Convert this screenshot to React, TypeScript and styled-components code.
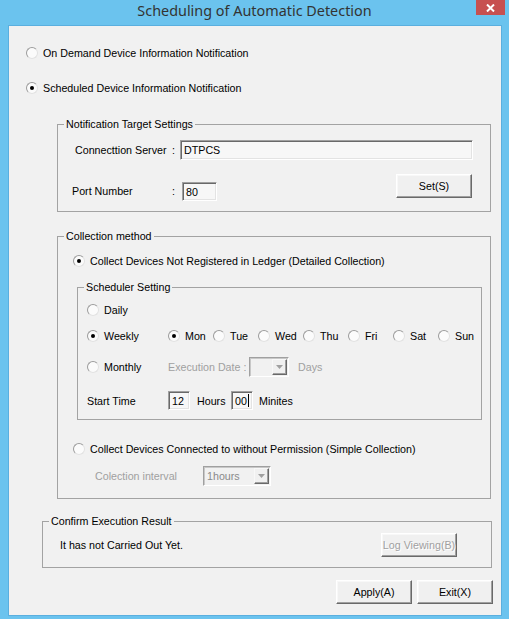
import React from 'react';
import styled, { createGlobalStyle } from 'styled-components';

const Global = createGlobalStyle`
  html, body { margin: 0; padding: 0; }
  body { font-family: "Liberation Sans", Arial, sans-serif; }
  * { box-sizing: border-box; }
`;

const Window = styled.div`
  width: 509px;
  height: 619px;
  background: #6bc3ee;
  display: flex;
  flex-direction: column;
`;

const TitleBar = styled.div`
  height: 25px;
  flex: none;
  display: grid;
  grid-template-columns: 1fr auto 1fr;
  align-items: start;
`;

const Title = styled.div`
  grid-column: 2;
  font-family: "Noto Sans", "Open Sans", sans-serif;
  font-size: 14.4px;
  line-height: 22px;
  color: #333333;
  white-space: nowrap;
`;

const CloseButton = styled.div`
  grid-column: 3;
  justify-self: end;
  width: 29px;
  height: 15px;
  margin-right: 4px;
  background: #c75050;
  display: flex;
  align-items: center;
  justify-content: center;
`;

const Body = styled.div`
  flex: 1;
  margin: 0 7px 3px 8px;
  background: #f1f1f1;
  border: 1px solid #5aafdf;
  display: flex;
  flex-direction: column;
  font-size: 10.7px;
  color: #000;
`;

const RadioCircle = styled.span<{ $checked?: boolean }>`
  width: 12px;
  height: 12px;
  flex: none;
  border-radius: 50%;
  background: #fbfbfb;
  border: 1px solid;
  border-color: #9c9c9c #e2e2e2 #e2e2e2 #9c9c9c;
  display: flex;
  align-items: center;
  justify-content: center;
  &::after {
    content: '';
    width: 4px;
    height: 4px;
    border-radius: 50%;
    background: #000;
    display: ${(p) => (p.$checked ? 'block' : 'none')};
  }
`;

const RadioLabel = styled.label<{ $mt?: number; $pl?: number }>`
  display: flex;
  align-items: center;
  gap: 5px;
  height: 16px;
  margin-top: ${(p) => p.$mt ?? 0}px;
  padding-left: ${(p) => p.$pl ?? 0}px;
  white-space: nowrap;
`;

const Radio: React.FC<{ checked?: boolean; label: string; mt?: number; pl?: number }> = ({
  checked,
  label,
  mt,
  pl,
}) => (
  <RadioLabel $mt={mt} $pl={pl}>
    <RadioCircle $checked={checked} />
    <span>{label}</span>
  </RadioLabel>
);

const Group = styled.div<{ $ml: number; $w: number; $h: number; $mt: number }>`
  position: relative;
  flex: none;
  margin-top: ${(p) => p.$mt}px;
  margin-left: ${(p) => p.$ml}px;
  width: ${(p) => p.$w}px;
  height: ${(p) => p.$h}px;
  border: 1px solid #a3a3a3;
  display: flex;
  flex-direction: column;
`;

const Legend = styled.span`
  position: absolute;
  top: -7px;
  left: 6px;
  padding: 0 2px;
  line-height: 13px;
  background: #f1f1f1;
  white-space: nowrap;
`;

const FieldRow = styled.div<{ $mt: number; $pl: number; $h: number }>`
  display: flex;
  align-items: center;
  margin-top: ${(p) => p.$mt}px;
  padding-left: ${(p) => p.$pl}px;
  height: ${(p) => p.$h}px;
`;

const FieldLabel = styled.span<{ $w: number; $gray?: boolean }>`
  width: ${(p) => p.$w}px;
  flex: none;
  white-space: nowrap;
  color: ${(p) => (p.$gray ? '#a0a0a0' : '#000')};
`;

const Colon = styled.span<{ $w: number }>`
  width: ${(p) => p.$w}px;
  flex: none;
`;

const TextBox = styled.div<{ $w: number; $h: number }>`
  width: ${(p) => p.$w}px;
  height: ${(p) => p.$h}px;
  flex: none;
  background: #f7f7f7;
  border: 1px solid;
  border-color: #a0a0a0 #ffffff #ffffff #a0a0a0;
  box-shadow: inset 1px 1px #696969, inset -1px -1px #e3e3e3;
  display: flex;
  align-items: center;
  padding-left: 3px;
  white-space: nowrap;
`;

const Caret = styled.span`
  width: 1px;
  height: 13px;
  background: #000;
  margin-left: 1px;
`;

const Button = styled.button<{ $disabled?: boolean }>`
  width: 76px;
  height: 24px;
  flex: none;
  padding: 0;
  font: inherit;
  color: ${(p) => (p.$disabled ? '#a0a0a0' : '#000')};
  background: #f0f0f0;
  border: 1px solid;
  border-color: #ffffff #696969 #696969 #ffffff;
  box-shadow: inset -1px -1px #a0a0a0, inset 1px 1px #f8f8f8;
  text-shadow: ${(p) => (p.$disabled ? '1px 1px #ffffff' : 'none')};
`;

const Combo = styled.div<{ $w: number }>`
  width: ${(p) => p.$w}px;
  height: 20px;
  flex: none;
  display: flex;
  border: 1px solid;
  border-color: #a0a0a0 #ffffff #ffffff #a0a0a0;
  box-shadow: inset 1px 1px #c8c8c8;
  background: #f1f1f1;
`;

const ComboText = styled.span`
  flex: 1;
  color: #8a8a8a;
  padding-left: 3px;
  display: flex;
  align-items: center;
`;

const DropButton = styled.span`
  width: 15px;
  height: 16px;
  margin: 1px 1px 0 0;
  flex: none;
  background: #f0f0f0;
  border: 1px solid;
  border-color: #f8f8f8 #696969 #696969 #f8f8f8;
  box-shadow: inset -1px -1px #a0a0a0;
  display: flex;
  align-items: center;
  justify-content: center;
`;

const DropDown: React.FC<{ w: number; value?: string }> = ({ w, value }) => (
  <Combo $w={w}>
    <ComboText>{value}</ComboText>
    <DropButton>
      <svg width="7" height="4" viewBox="0 0 7 4">
        <path d="M0 0H7L3.5 4Z" fill="#a0a0a0" />
      </svg>
    </DropButton>
  </Combo>
);

const SchedRow = styled.div<{ $mt: number; $h: number }>`
  display: flex;
  align-items: center;
  margin-top: ${(p) => p.$mt}px;
  height: ${(p) => p.$h}px;
  padding-left: 9px;
`;

const FirstCol = styled.div`
  width: 81px;
  flex: none;
  display: flex;
  align-items: center;
  white-space: nowrap;
`;

const DayGrid = styled.div`
  display: grid;
  grid-template-columns: repeat(7, 45px);
`;

const Gap = styled.span<{ $w: number }>`
  width: ${(p) => p.$w}px;
  flex: none;
`;

const ResultRow = styled.div`
  display: flex;
  align-items: center;
  justify-content: space-between;
  margin-top: 11px;
  height: 24px;
  padding: 0 34px 0 17px;
`;

const ActionRow = styled.div`
  display: flex;
  justify-content: flex-end;
  gap: 5px;
  margin-top: 12px;
  padding-right: 8px;
`;

const Text = styled.span<{ $gray?: boolean }>`
  white-space: nowrap;
  color: ${(p) => (p.$gray ? '#a0a0a0' : '#000')};
`;

const days = ['Mon', 'Tue', 'Wed', 'Thu', 'Fri', 'Sat', 'Sun'];

export default function App() {
  return (
    <>
      <Global />
      <Window>
        <TitleBar>
          <Title>Scheduling of Automatic Detection</Title>
          <CloseButton>
            <svg width="9" height="8" viewBox="0 0 9 8">
              <path d="M1 0.5L8 7.5M8 0.5L1 7.5" stroke="#fff" strokeWidth="2" />
            </svg>
          </CloseButton>
        </TitleBar>
        <Body>
          <Radio label="On Demand Device Information Notification" mt={19} pl={17} />
          <Radio checked label="Scheduled Device Information Notification" mt={19} pl={17} />

          <Group $mt={28} $ml={48} $w={434} $h={88}>
            <Legend>Notification Target Settings</Legend>
            <FieldRow $mt={15} $pl={17} $h={20}>
              <FieldLabel $w={97}>Connecttion Server</FieldLabel>
              <Colon $w={8}>:</Colon>
              <TextBox $w={293} $h={20}>DTPCS</TextBox>
            </FieldRow>
            <FieldRow $mt={14} $pl={14} $h={27}>
              <FieldLabel $w={100} style={{ alignSelf: 'flex-end', lineHeight: '19px' }}>
                Port Number
              </FieldLabel>
              <Colon $w={10} style={{ alignSelf: 'flex-end', lineHeight: '19px' }}>
                :
              </Colon>
              <TextBox $w={35} $h={19} style={{ alignSelf: 'flex-end' }}>
                80
              </TextBox>
              <Button style={{ marginLeft: 'auto', marginRight: 18, alignSelf: 'flex-start' }}>
                Set(S)
              </Button>
            </FieldRow>
          </Group>

          <Group $mt={24} $ml={48} $w={434} $h={263}>
            <Legend>Collection method</Legend>
            <Radio checked label="Collect Devices Not Registered in Ledger (Detailed Collection)" mt={16} pl={15} />

            <Group $mt={18} $ml={19} $w={405} $h={133}>
              <Legend>Scheduler Setting</Legend>
              <SchedRow $mt={14} $h={16}>
                <FirstCol>
                  <Radio label="Daily" />
                </FirstCol>
              </SchedRow>
              <SchedRow $mt={10} $h={16}>
                <FirstCol>
                  <Radio checked label="Weekly" />
                </FirstCol>
                <DayGrid>
                  {days.map((d) => (
                    <Radio key={d} checked={d === 'Mon'} label={d} />
                  ))}
                </DayGrid>
              </SchedRow>
              <SchedRow $mt={13} $h={20}>
                <FirstCol>
                  <Radio label="Monthly" />
                </FirstCol>
                <FieldLabel $w={81} $gray>
                  Execution Date :
                </FieldLabel>
                <DropDown w={40} />
                <Gap $w={9} />
                <Text $gray>Days</Text>
              </SchedRow>
              <SchedRow $mt={14} $h={19}>
                <FirstCol>Start Time</FirstCol>
                <TextBox $w={22} $h={19}>12</TextBox>
                <Gap $w={7} />
                <FieldLabel $w={34}>Hours</FieldLabel>
                <TextBox $w={22} $h={19}>
                  00
                  <Caret />
                </TextBox>
                <Gap $w={6} />
                <Text>Minites</Text>
              </SchedRow>
            </Group>

            <Radio label="Collect Devices Connected to without Permission (Simple Collection)" mt={21} pl={15} />
            <FieldRow $mt={9} $pl={37} $h={20}>
              <FieldLabel $w={108} $gray>
                Colection interval
              </FieldLabel>
              <DropDown w={68} value="1hours" />
            </FieldRow>
          </Group>

          <Group $mt={22} $ml={33} $w={450} $h={47}>
            <Legend>Confirm Execution Result</Legend>
            <ResultRow>
              <Text>It has not Carried Out Yet.</Text>
              <Button $disabled>Log Viewing(B)</Button>
            </ResultRow>
          </Group>

          <ActionRow>
            <Button>Apply(A)</Button>
            <Button>Exit(X)</Button>
          </ActionRow>
        </Body>
      </Window>
    </>
  );
}
